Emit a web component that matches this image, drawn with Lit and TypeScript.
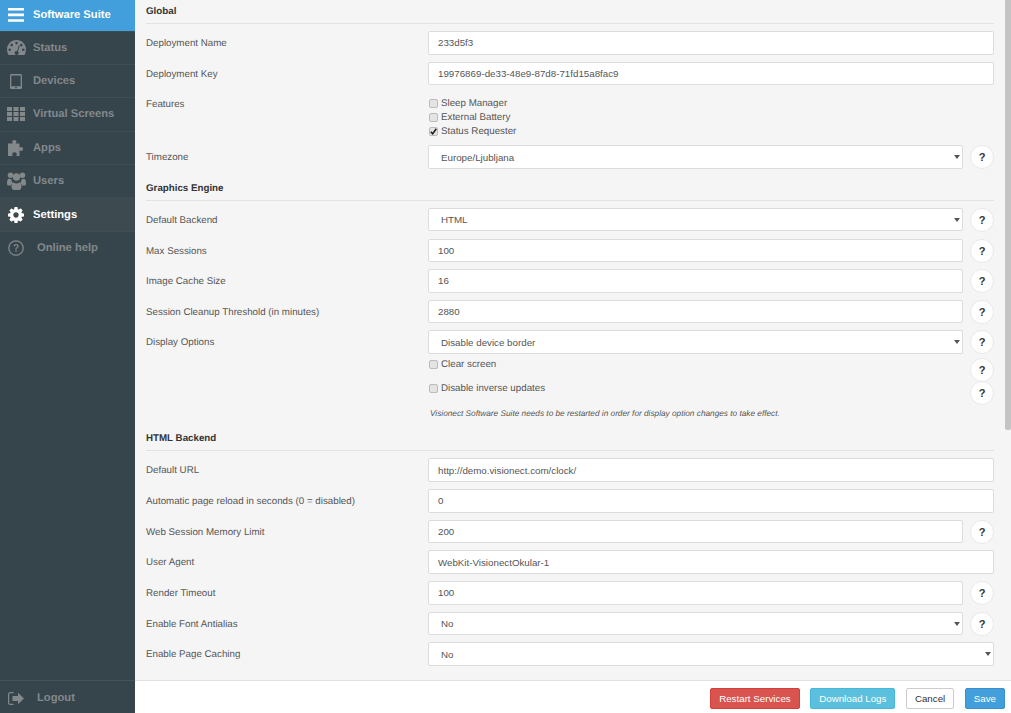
import { LitElement, html, css, svg } from "lit";
import { customElement } from "lit/decorators.js";

const icons: Record<string, any> = {
  menu: svg`<svg class="ic" style="width:16px;height:14px" viewBox="0 0 16 14"><path d="M0 0h16v2.600H0zM0 5.600h16v2.600H0zM0 11.200h16v2.600H0z"/></svg>`,
  gauge: svg`<svg class="ic" style="width:19px;height:15px" viewBox="0 0 19 15"><path fill-rule="evenodd" d="M9.500 0C4.200 0 0 4.200 0 9.500 0 11.400.5 13.200 1.500 15h16c1-1.800 1.500-3.600 1.500-5.500C19 4.200 14.800 0 9.500 0zM9.500 1.800a1.300 1.300 0 1 1 0 2.600 1.300 1.300 0 0 1 0-2.600zM4.700 3.800a1.300 1.300 0 1 1 0 2.600 1.300 1.300 0 0 1 0-2.600zM14.300 3.800a1.300 1.300 0 1 1 0 2.600 1.300 1.300 0 0 1 0-2.600zM2.700 8.500a1.300 1.300 0 1 1 0 2.600 1.300 1.300 0 0 1 0-2.600zM16.300 8.500a1.300 1.300 0 1 1 0 2.600 1.300 1.300 0 0 1 0-2.600zM11.800 5.200l.9.3-1.700 6a2 2 0 1 1-3 .3 2 2 0 0 1 2.100-.6z"/></svg>`,
  tablet: svg`<svg class="ic" style="width:12px;height:15px" viewBox="0 0 12 15"><path fill-rule="evenodd" d="M1.600 0h8.800C11.300 0 12 .7 12 1.600v11.800c0 .9-.7 1.600-1.600 1.600H1.600C.7 15 0 14.300 0 13.400V1.600C0 .7.700 0 1.600 0zM1.300 1.500v10.800h9.400V1.500zM6 12.700a.8.800 0 1 0 0 1.600.8.800 0 0 0 0-1.600z"/></svg>`,
  grid: svg`<svg class="ic" style="width:18px;height:14px" viewBox="0 0 18 14"><path d="M0 0h5v3.900H0zM6.500 0h5v3.900h-5zM13 0h5v3.900h-5zM0 5h5v3.900H0zM6.500 5h5v3.900h-5zM13 5h5v3.900h-5zM0 10h5v3.900H0zM6.500 10h5v3.900h-5zM13 10h5v3.900h-5z"/></svg>`,
  puzzle: svg`<svg class="ic" style="width:17px;height:16px" viewBox="0 0 17 16"><path d="M0 3.500h4.800C4.600 2.900 4.200 2.500 4.200 1.800 4.200.7 5.100 0 6.300 0s2.100.7 2.100 1.800c0 .7-.4 1.100-.6 1.700h3.700v4.200c.6-.3 1-.7 1.700-.7 1.100 0 1.800.8 1.800 2s-.7 2-1.800 2c-.7 0-1.100-.4-1.700-.7V16H8.200c.3-.6.600-1.100.6-1.800 0-1.100-1-1.900-2.300-1.900s-2.300.8-2.300 1.900c0 .7.300 1.200.6 1.800H0z"/></svg>`,
  users: svg`<svg class="ic" style="width:19px;height:18px" viewBox="0 0 19 18"><circle cx="3.500" cy="3.200" r="2.700"/><circle cx="15.500" cy="3.200" r="2.700"/><circle cx="9.500" cy="5" r="3.700"/><path d="M0 11c0-2.500.8-4.200 2-4.200.5 0 1.200.6 2.600.6-.1 1.500.4 2.800 1.300 3.600-1 .6-1.700 1.500-2 2.600H1.300C.5 13.600 0 12.700 0 11zM19 11c0-2.500-.8-4.200-2-4.200-.5 0-1.200.6-2.600.6.1 1.500-.4 2.800-1.300 3.600 1 .6 1.700 1.500 2 2.600h2.600c.8 0 1.300-.9 1.300-2.600zM6.700 10.500c.8.700 1.700 1 2.800 1s2-.3 2.800-1c1.300.2 2.200 1.600 2.200 4 0 2-1 3.500-2.400 3.500H6.900c-1.400 0-2.400-1.500-2.400-3.500 0-2.400.9-3.800 2.200-4z"/></svg>`,
  cog: svg`<svg class="ic" style="width:16px;height:16px" viewBox="0 -128 1536 1536"><path d="M1024 640q0-106-75-181t-181-75-181 75-75 181 75 181 181 75 181-75 75-181zm512-109v222q0 12-8 23t-20 13l-185 28q-19 54-39 91 35 50 107 138 10 12 10 25t-9 23q-27 37-99 108t-94 71q-12 0-26-9l-138-108q-44 23-91 38-16 136-29 186-7 28-36 28h-222q-14 0-24.500-8.500t-11.500-21.500l-28-184q-49-16-90-37l-141 107q-10 9-25 9-14 0-25-11-126-114-165-168-7-10-7-23 0-12 8-23 15-21 51-66.500t54-70.500q-27-50-41-99l-183-27q-13-2-21-12.500t-8-23.500v-222q0-12 8-23t19-13l186-28q14-46 39-92-40-57-107-138-10-12-10-24 0-10 9-23 26-36 98.500-107.500t94.500-71.500q13 0 26 10l138 107q44-23 91-38 16-136 29-186 7-28 36-28h222q14 0 24.500 8.500t11.500 21.500l28 184q49 16 90 37l142-107q9-9 24-9 13 0 25 10 129 119 165 170 7 8 7 22 0 12-8 23-15 21-51 66.500t-54 70.500q26 50 41 98l183 28q13 2 21 12.500t8 23.500z"/></svg>`,
  help: svg`<svg class="ic" style="width:16px;height:16px" viewBox="0 0 16 16"><circle cx="8" cy="8" r="7.200" fill="none" stroke="currentColor" stroke-width="1.300"/><path d="M5.500 6.300C5.600 4.900 6.600 4 8.100 4c1.400 0 2.500.9 2.500 2.100 0 1-.5 1.500-1.200 2-.6.400-.8.700-.8 1.300H7.300c0-1 .3-1.500 1-2 .5-.4.900-.7.900-1.200 0-.6-.5-1-1.100-1-.7 0-1.100.4-1.200 1.100zM7.300 10.300h1.400v1.500H7.300z"/></svg>`,
  logout: svg`<svg class="ic" style="width:16px;height:13px" viewBox="0 0 16 13"><path d="M5.500 1.200H2.300C1.700 1.200 1.200 1.700 1.200 2.300v8.400c0 .6.500 1.100 1.100 1.100h3.200V13H2.300C1 13 0 12 0 10.700V2.300C0 1 1 0 2.300 0h3.200z"/><path d="M10 .8l6 5.700-6 5.700V9H4.500V4H10z"/></svg>`,
};

const navItems = [
  { icon: "gauge", label: "Status" },
  { icon: "tablet", label: "Devices" },
  { icon: "grid", label: "Virtual Screens" },
  { icon: "puzzle", label: "Apps" },
  { icon: "users", label: "Users" },
  { icon: "cog", label: "Settings", active: true },
  { icon: "help", label: "Online help", wide: true },
];

@customElement("app-root")
export class AppRoot extends LitElement {
  static styles = css`
    :host { display: flex; height: 100vh; overflow: hidden; font-family: "Liberation Sans", Arial, sans-serif; font-size: 9.750px; color: #555; background: #f5f5f5; text-rendering: geometricPrecision; }
    * { box-sizing: border-box; }
    .side { width: 135px; flex: none; display: flex; flex-direction: column; background: #36454c; color: #83888b; font-weight: 700; font-size: 11.200px; }
    .brand { height: 30.500px; background: #429fdb; color: #fff; display: flex; align-items: center; }
    .slot { width: 33px; flex: none; display: flex; justify-content: center; padding-right: 1px; }
    .nav { height: 33.400px; display: flex; align-items: center; border-top: 1px solid #3f4d54; }
    .nav:first-of-type { border-top: none; }
    .nav.active { background: #3d4a50; color: #fff; border-top-color: #3d4a50; }
    .nav.wide .slot { width: 37px; padding-right: 5px; }
    .spacer { flex: 1; }
    .bottom { height: 33px; display: flex; align-items: center; border-top: 1px solid #465459; padding-top: 2px; }
    .bottom .slot { width: 37px; padding-right: 5px; }
    .ic { fill: currentColor; display: block; }
    .main { flex: 1; min-width: 0; display: flex; flex-direction: column; }
    .scroll { flex: 1; min-height: 0; display: flex; overflow: hidden; }
    .content { flex: 1; min-width: 0; padding: 0 11px; }
    .bar { width: 6px; flex: none; }
    .thumb { height: 430px; background: #c4c4c4; border-radius: 0 0 2px 2px; }
    .title { height: 23px; border-bottom: 1px solid #e2e2e2; margin: 2px 0 7px; font-weight: 700; color: #333; line-height: 21px; }
    .title.first { height: 24px; margin-top: 0; line-height: 23px; }
    .title.html { margin-top: 0; }
    .row { display: flex; height: 30.650px; }
    .row.features { height: 53px; }
    .row.display { height: 27.200px; }
    .row.opt { height: 23.500px; }
    .row.note { height: 23.800px; padding-top: 2px; }
    .label { width: 282px; flex: none; line-height: 26px; }
    .field { flex: 1; min-width: 0; display: flex; gap: 7px; align-items: flex-start; }
    input.text, select { flex: 1; min-width: 0; height: 23.500px; background: #fff; border: 1px solid #dcdcdc; border-radius: 2px; font: inherit; color: #555; padding: 0 9px; outline: none; }
    .sel { flex: 1; min-width: 0; position: relative; display: flex; }
    select { appearance: none; padding-left: 12px; }
    .sel::after { content: ""; position: absolute; right: 3px; top: 10px; border: 3px solid transparent; border-top: 4px solid #555; border-bottom: 0; }
    .help { width: 24px; height: 24px; flex: none; padding: 0; border: 1px solid #e8e8e8; border-radius: 50%; background: #fff; font: 700 11px "Liberation Sans", Arial, sans-serif; color: #333; }
    .check { display: flex; align-items: center; gap: 3px; height: 14px; padding-left: 1px; }
    .checks { padding-top: 4px; }
    .box { width: 9px; height: 9px; border: 1px solid #bbb; border-radius: 2px; background: #e4e4e4; display: flex; flex: none; }
    .box svg { width: 7px; height: 7px; fill: none; stroke: #222; stroke-width: 1.600; }
    .optfield { display: flex; justify-content: space-between; flex: 1; }
    .notetext { font-size: 8.250px; font-style: italic; margin-left: 2px; line-height: 14px; }
    .foot { height: 33px; flex: none; background: #fff; border-top: 1px solid #e2e2e2; display: flex; justify-content: flex-end; align-items: flex-start; gap: 10.500px; padding: 7px 6px 0 0; }
    .btn { height: 21px; border: 1px solid; border-radius: 2px; font: inherit; color: #fff; padding: 0 8px; }
    .red { background: #d9534f; border-color: #d43f3a; }
    .cyan { background: #5bc0de; border-color: #46b8da; }
    .plain { background: #fff; border-color: #ccc; color: #333; }
    .blue { background: #429fdb; border-color: #3a8fcc; }
  `;

  private inp(label: string, value: string, help = false) {
    return html`<div class="row"><div class="label">${label}</div><div class="field"><input class="text" .value=${value} />${help ? this.q() : ""}</div></div>`;
  }
  private sel(label: string, value: string, help = true) {
    return html`<div class="row"><div class="label">${label}</div><div class="field"><div class="sel"><select><option>${value}</option></select></div>${help ? this.q() : ""}</div></div>`;
  }
  private q() { return html`<button class="help">?</button>`; }
  private chk(label: string, on = false) {
    return html`<label class="check"><span class="box">${on ? svg`<svg viewBox="0 0 7 7"><path d="M.8 3.800 2.700 5.800 6.300 .8"/></svg>` : ""}</span>${label}</label>`;
  }

  render() {
    return html`
      <aside class="side">
        <div class="brand"><span class="slot">${icons.menu}</span>Software Suite</div>
        ${navItems.map((n) => html`<div class="nav ${n.active ? "active" : ""} ${n.wide ? "wide" : ""}"><span class="slot">${icons[n.icon]}</span>${n.label}</div>`)}
        <div class="spacer"></div>
        <div class="bottom"><span class="slot">${icons.logout}</span>Logout</div>
      </aside>
      <div class="main">
        <div class="scroll">
          <div class="content">
            <div class="title first">Global</div>
            ${this.inp("Deployment Name", "233d5f3")}
            ${this.inp("Deployment Key", "19976869-de33-48e9-87d8-71fd15a8fac9")}
            <div class="row features"><div class="label">Features</div>
              <div class="checks">${this.chk("Sleep Manager")}${this.chk("External Battery")}${this.chk("Status Requester", true)}</div></div>
            ${this.sel("Timezone", "Europe/Ljubljana")}
            <div class="title">Graphics Engine</div>
            ${this.sel("Default Backend", "HTML")}
            ${this.inp("Max Sessions", "100", true)}
            ${this.inp("Image Cache Size", "16", true)}
            ${this.inp("Session Cleanup Threshold (in minutes)", "2880", true)}
            <div class="row display">
              <div class="label">Display Options</div>
              <div class="field"><div class="sel"><select><option>Disable device border</option></select></div>${this.q()}</div>
            </div>
            <div class="row opt"><div class="label"></div><div class="optfield">${this.chk("Clear screen")}${this.q()}</div></div>
            <div class="row opt"><div class="label"></div><div class="optfield">${this.chk("Disable inverse updates")}${this.q()}</div></div>
            <div class="row note"><div class="label"></div><div class="notetext">Visionect Software Suite needs to be restarted in order for display option changes to take effect.</div></div>
            <div class="title html">HTML Backend</div>
            ${this.inp("Default URL", "http://demo.visionect.com/clock/")}
            ${this.inp("Automatic page reload in seconds (0 = disabled)", "0")}
            ${this.inp("Web Session Memory Limit", "200", true)}
            ${this.inp("User Agent", "WebKit-VisionectOkular-1")}
            ${this.inp("Render Timeout", "100", true)}
            ${this.sel("Enable Font Antialias", "No")}
            ${this.sel("Enable Page Caching", "No", false)}
          </div>
          <div class="bar"><div class="thumb"></div></div>
        </div>
        <div class="foot">
          <button class="btn red">Restart Services</button>
          <button class="btn cyan">Download Logs</button>
          <button class="btn plain">Cancel</button>
          <button class="btn blue">Save</button>
        </div>
      </div>
    `;
  }
}
